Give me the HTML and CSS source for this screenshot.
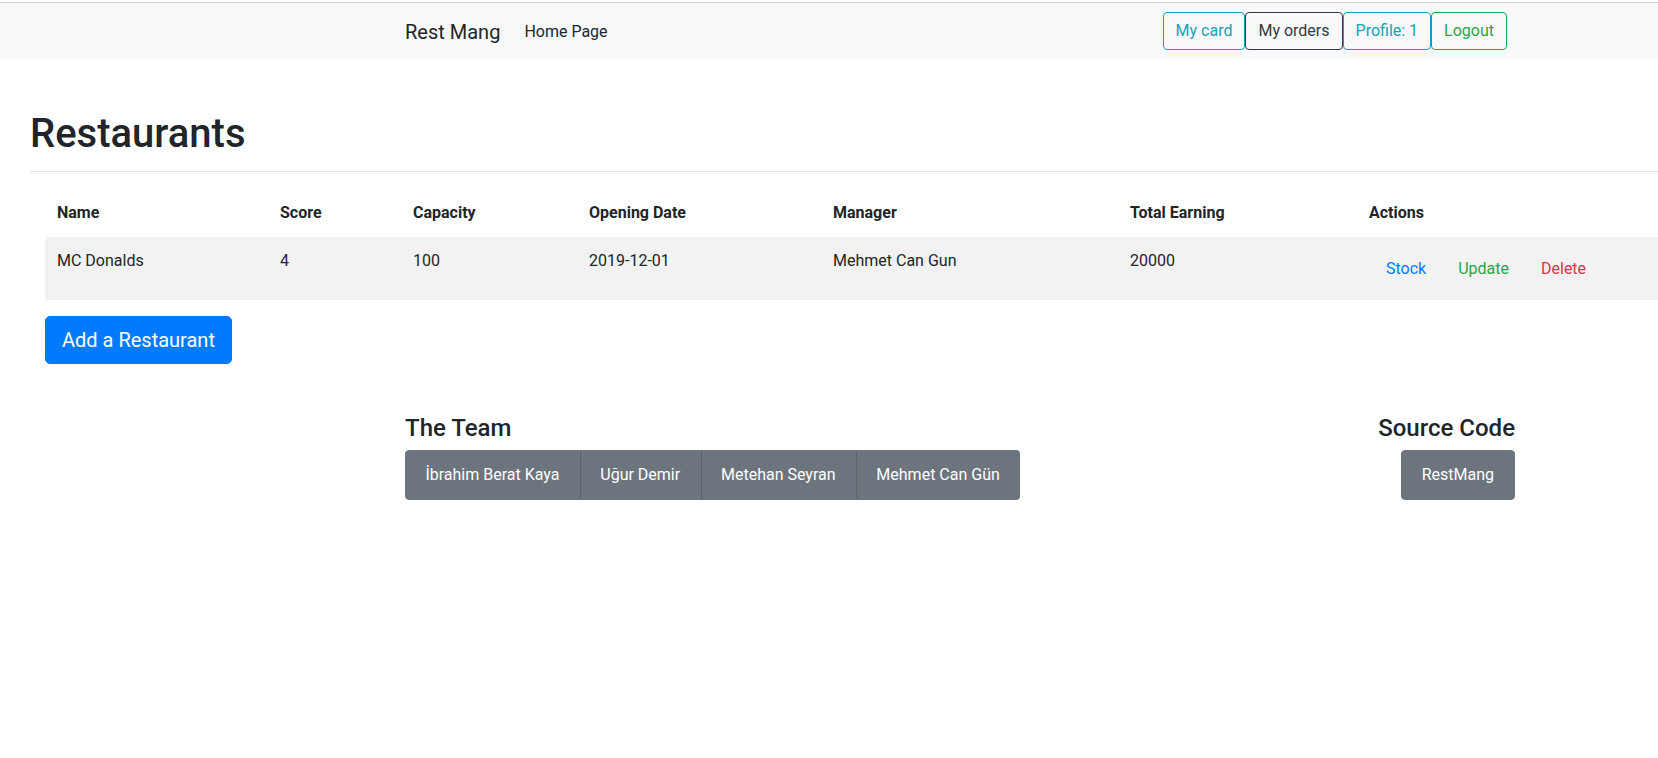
FILE: index.html
```html
<!DOCTYPE html>
<html lang="en">
<head>
<meta charset="utf-8">
<title>Rest Mang</title>
<link rel="stylesheet" href="styles.css">
</head>
<body>
<div class="page">
  <div class="topline"></div>
  <nav class="navbar">
    <div class="container nav-inner">
      <a class="brand" href="#">Rest Mang</a>
      <a class="nav-link" href="#">Home Page</a>
      <div class="nav-actions">
        <a class="btn btn-outline-info" href="#">My card</a>
        <a class="btn btn-outline-dark" href="#">My orders</a>
        <a class="btn btn-outline-info" href="#">Profile: 1</a>
        <a class="btn btn-outline-success" href="#">Logout</a>
      </div>
    </div>
  </nav>

  <main class="main">
    <h1 class="title">Restaurants</h1>
    <hr class="rule">
    <table class="table">
      <colgroup>
        <col class="c-name"><col class="c-score"><col class="c-cap"><col class="c-date"><col class="c-man"><col class="c-earn"><col>
      </colgroup>
      <thead>
        <tr>
          <th>Name</th><th>Score</th><th>Capacity</th><th>Opening Date</th><th>Manager</th><th>Total Earning</th><th>Actions</th>
        </tr>
      </thead>
      <tbody>
        <tr class="striped">
          <td>MC Donalds</td><td>4</td><td>100</td><td>2019-12-01</td><td>Mehmet Can Gun</td><td>20000</td>
          <td>
            <div class="actions">
              <a class="btn btn-text text-primary" href="#">Stock</a>
              <a class="btn btn-text text-success" href="#">Update</a>
              <a class="btn btn-text text-danger" href="#">Delete</a>
            </div>
          </td>
        </tr>
      </tbody>
    </table>
    <a class="btn btn-lg btn-primary add-btn" href="#">Add a Restaurant</a>
  </main>

  <footer class="container footer">
    <div class="team">
      <h4 class="foot-title">The Team</h4>
      <div class="btn-group">
        <a class="btn btn-secondary btn-team" href="#">İbrahim Berat Kaya</a>
        <a class="btn btn-secondary btn-team" href="#">Uğur Demir</a>
        <a class="btn btn-secondary btn-team" href="#">Metehan Seyran</a>
        <a class="btn btn-secondary btn-team" href="#">Mehmet Can Gün</a>
      </div>
    </div>
    <div class="source">
      <h4 class="foot-title">Source Code</h4>
      <a class="btn btn-secondary btn-team btn-source" href="#">RestMang</a>
    </div>
  </footer>
</div>
</body>
</html>
```

FILE: styles.css
```css
* { box-sizing: border-box; }
html, body { margin: 0; padding: 0; overflow: hidden; background: #fff; }
body {
  font-family: Roboto, "Liberation Sans", sans-serif;
  font-size: 16px;
  line-height: 1.5;
  color: #212529;
}
a { text-decoration: none; }
.page { width: 1920px; min-height: 758px; }

.topline { height: 3px; background: #fff; border-bottom: 1px solid #cfcfcf; }

.container { width: 1140px; margin: 0 auto; padding: 0 15px; }

.navbar { background: #f8f9fa; padding: 8px 0 8px; }
.nav-inner { display: flex; align-items: center; }
.brand { font-size: 20px; line-height: 30px; color: #212529; margin-right: 16px; padding: 5px 0 4px; }
.nav-link { color: #212529; padding: 9px 8px 7px; line-height: 24px; }
.nav-actions { margin-left: auto; margin-right: 8px; display: flex; }

.btn {
  display: inline-block;
  font-size: 16px;
  line-height: 24px;
  padding: 6px 12px;
  border: 1px solid transparent;
  border-radius: 4px;
  text-align: center;
  white-space: nowrap;
}
.btn-outline-info { color: #17a2b8; border-color: #17a2b8; }
.btn-outline-dark { color: #343a40; border-color: #343a40; }
.btn-outline-success { color: #28a745; border-color: #28a745; }

.main { padding: 51px 30px 0; }
.title { font-size: 40px; font-weight: 500; line-height: 48px; margin: 0 0 13px; }
.rule { border: 0; border-top: 1px solid rgba(0,0,0,.1); margin: 0 0 17px; }

.table { width: 1830px; margin: 0 15px 16px; border-collapse: collapse; table-layout: fixed; }
.c-name { width: 223px; }
.c-score { width: 133px; }
.c-cap { width: 176px; }
.c-date { width: 244px; }
.c-man { width: 297px; }
.c-earn { width: 239px; }
.table th, .table td { padding: 12px; text-align: left; vertical-align: top; line-height: 24px; }
.table th { font-weight: 700; }
.striped { background: #f2f2f2; }
.striped td { height: 63px; }
.actions { display: flex; gap: 6px; margin-left: 4px; padding-top: 1px; }
.text-primary { color: #007bff; }
.text-success { color: #28a745; }
.text-danger { color: #dc3545; }

.btn-lg { font-size: 20px; line-height: 30px; padding: 8px 16px; border-radius: 5px; }
.btn-primary { background: #007bff; border-color: #007bff; color: #fff; }
.add-btn { margin-left: 15px; }

.footer { display: flex; justify-content: space-between; padding-top: 50px; }
.foot-title { font-size: 24px; font-weight: 500; line-height: 28.8px; margin: 0 0 7px; }
.source { text-align: right; }
.btn-secondary { background: #6c757d; border-color: #6c757d; color: #fff; }
.btn-team { padding: 12px 19.4px; line-height: 24px; }
.btn-source { padding: 12px 20px; }
.btn-group { display: flex; }
.btn-group .btn { border-radius: 0; }
.btn-group .btn + .btn { border-left-color: #5a6268; }
.btn-group .btn:first-child { border-radius: 4px 0 0 4px; }
.btn-group .btn:last-child { border-radius: 0 4px 4px 0; }
```
